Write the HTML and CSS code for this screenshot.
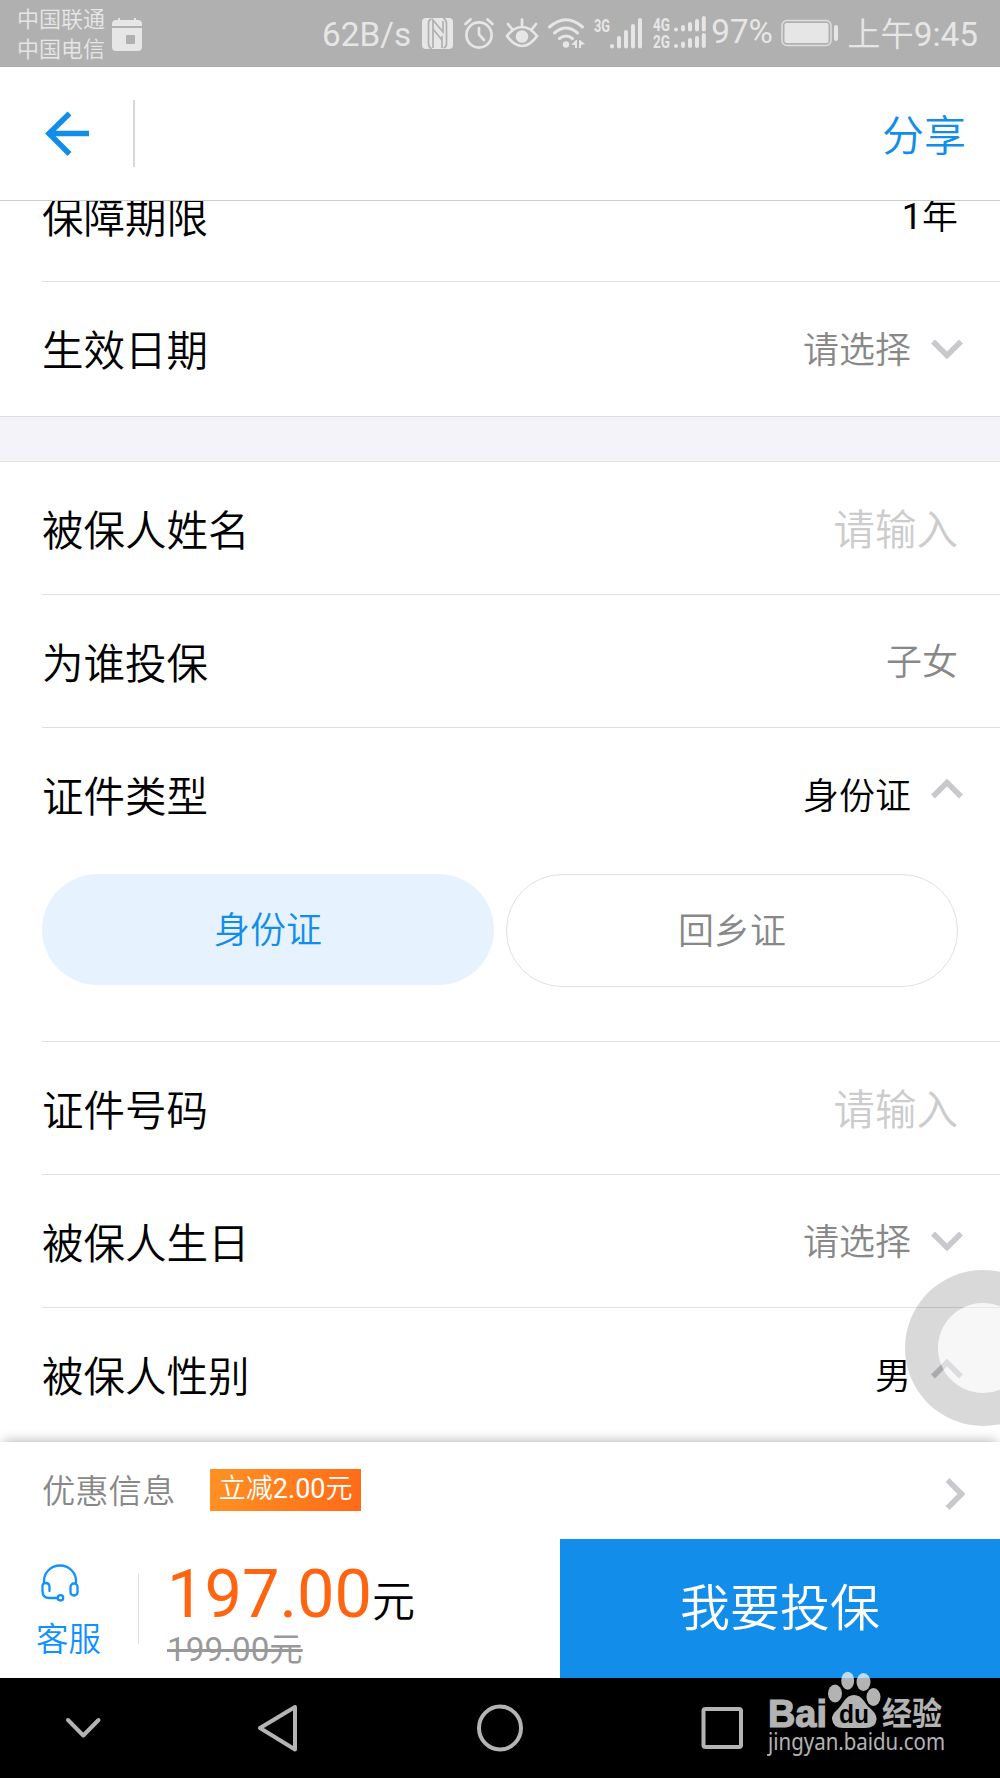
FILE: index.html
```html
<!DOCTYPE html>
<html lang="zh-Hans">
<head>
    <meta charset="UTF-8">
    <meta name="viewport" content="width=device-width, initial-scale=1.0">
    <title>投保信息</title>
    <link rel="stylesheet" href="styles.css">
</head>
<body>
    <div class="phone">
        <!-- 系统状态栏 -->
        <div class="status-bar">
            <div class="carriers">
                <span>中国联通</span>
                <span>中国电信</span>
            </div>
            <svg class="icon-calendar" width="30" height="33" viewBox="0 0 30 33">
                <path fill="#e6e6e6" d="M0 8V6q0-4 4-4h2V0h2v2h14V0h2v2h2q4 0 4 4v2zM0 10h30v19q0 4-4 4H4q-4 0-4-4z"/>
                <rect x="14" y="17" width="9" height="9" rx="1" fill="#b0b0b0"/>
            </svg>
            <div class="status-right">
                <span class="speed num">62B/s</span>
                <svg class="icon-nfc" width="31" height="31" viewBox="0 0 31 31">
                    <rect width="31" height="31" rx="4" fill="#e6e6e6"/>
                    <path fill="none" stroke="#b0b0b0" stroke-width="1.700" d="M9.500 31Q6.500 29 6.500 25V5q0-3 3-4M11 30V2l10 12V3M21.500 0q3 2 3 6v20q0 3-3 4M20 30V18M11 11l9 11v8"/>
                </svg>
                <svg class="icon-alarm" width="30" height="31" viewBox="0 0 30 31" fill="none" stroke="#e6e6e6" stroke-width="2.700" stroke-linecap="round">
                    <circle cx="15" cy="17" r="12.600"/>
                    <path d="M1.500 6l5-4.500M23.500 1.500l5 4.500M15 10v6.500l5 5.500"/>
                </svg>
                <svg class="icon-eye" width="34" height="30" viewBox="0 0 34 30" fill="none" stroke="#e6e6e6" stroke-width="2.700" stroke-linecap="round">
                    <path d="M2 18Q9 9 17 9t15 9Q25 28 17 28T2 18zM17 1.500v6M3 6l4 5M31 6l-4 5"/>
                    <circle cx="17" cy="18.500" r="6.300" fill="#e6e6e6" stroke="none"/>
                </svg>
                <svg class="icon-wifi" width="38" height="31" viewBox="0 0 38 31" fill="none" stroke="#e6e6e6" stroke-width="3" stroke-linecap="round">
                    <path d="M1.500 9q16.500-14.500 33 0M6.500 15q11.500-10 23 0M11.500 20.500q6.500-5 13 0"/>
                    <circle cx="18" cy="26.500" r="3.200" fill="#e6e6e6" stroke="none"/>
                    <path fill="#e6e6e6" stroke="none" d="M24 26l4-4h1v8h-2v-3h-3zM31 22h1l5 4-4 1v3h-2z"/>
                </svg>
                <svg class="icon-signal" width="48" height="32" viewBox="0 0 48 32">
                    <text class="net" x="0" y="13.500" font-size="18" textLength="16" lengthAdjust="spacingAndGlyphs">3G</text>
                    <path stroke="#e6e6e6" stroke-width="4" stroke-linecap="round" d="M18 28v.5M25 20v8.500M32 14v14.500M39 8v20.500M46 2v26.500"/>
                </svg>
                <svg class="icon-dual" width="53" height="33" viewBox="0 0 53 33">
                    <text class="net" x="0" y="15" font-size="18" textLength="17" lengthAdjust="spacingAndGlyphs">4G</text>
                    <text class="net" x="0" y="32" font-size="18" textLength="17" lengthAdjust="spacingAndGlyphs">2G</text>
                    <path stroke="#e6e6e6" stroke-width="4" stroke-linecap="round" d="M23 13.500v.1M30 11v2.500M37 8v5.500M44 5v8.500M50.800 2v11.500M23 30v.1M30 27.500v2.500M37 24v6M44 22v8M50.800 19v11"/>
                </svg>
                <span class="percent num">97%</span>
                <svg class="icon-battery" width="57" height="28" viewBox="0 0 57 28">
                    <rect x="1" y="1.500" width="49" height="25" rx="5" fill="none" stroke="#dedede" stroke-width="1.500"/>
                    <rect x="3.500" y="4" width="44" height="20" rx="2" fill="#e6e6e6"/>
                    <rect x="53" y="6" width="4" height="16" rx="2" fill="#e6e6e6"/>
                </svg>
                <span class="time">上午<span class="num">9:45</span></span>
            </div>
        </div>

        <header class="title-bar">
            <svg class="icon-back" width="44" height="45" viewBox="0 0 44 45" fill="none" stroke="#128eea" stroke-width="5.500">
                <path d="M24.500 2.500L4 22.500 24.500 43M4 22.500h40"/>
            </svg>
            <span class="title-line"></span>
            <a class="share">分享</a>
        </header>

        <!-- 投保表单，第一行滚动到标题栏下方 -->
        <main class="content">
            <div class="form">
                <div class="row">
                    <span class="label">保障期限</span>
                    <span class="value dark"><span class="num">1</span>年</span>
                </div>
                <div class="row">
                    <span class="label">生效日期</span>
                    <span class="value">请选择</span>
                    <svg class="arrow" width="32" height="20" viewBox="0 0 32 20"><path d="M2 2.500l14 14 14-14"/></svg>
                </div>
            </div>
            <div class="gap"></div>
            <div class="form">
                <div class="row">
                    <span class="label">被保人姓名</span>
                    <span class="value hint">请输入</span>
                </div>
                <div class="row">
                    <span class="label">为谁投保</span>
                    <span class="value">子女</span>
                </div>
                <div class="row with-options">
                    <span class="label">证件类型</span>
                    <span class="value dark">身份证</span>
                    <svg class="arrow up" width="32" height="20" viewBox="0 0 32 20"><path d="M2 17.500l14-14 14 14"/></svg>
                </div>
                <div class="options">
                    <span class="option active">身份证</span>
                    <span class="option">回乡证</span>
                </div>
                <div class="row">
                    <span class="label">证件号码</span>
                    <span class="value hint">请输入</span>
                </div>
                <div class="row">
                    <span class="label">被保人生日</span>
                    <span class="value">请选择</span>
                    <svg class="arrow" width="32" height="20" viewBox="0 0 32 20"><path d="M2 2.500l14 14 14-14"/></svg>
                </div>
                <div class="row">
                    <span class="label">被保人性别</span>
                    <span class="value dark">男</span>
                    <svg class="arrow up" width="32" height="20" viewBox="0 0 32 20"><path d="M2 17.500l14-14 14 14"/></svg>
                </div>
            </div>
        </main>

        <footer class="bottom">
            <div class="coupon">
                <span class="coupon-label">优惠信息</span>
                <span class="badge">立减<span class="num">2.00</span>元</span>
                <svg class="arrow next" width="20" height="32" viewBox="0 0 20 32"><path d="M2.500 2l14 14-14 14"/></svg>
            </div>
            <div class="pay">
                <div class="service">
                    <svg width="38" height="38" viewBox="0 0 38 38" fill="none" stroke="#0f92ff" stroke-width="2.300" stroke-linecap="round">
                        <path d="M3 19v-2a16 15.500 0 0 1 32 0v2"/>
                        <path d="M8.500 27v-4q0-4-3.700-4T1.500 23v4q0 7 7 7H17"/>
                        <rect x="29.500" y="19.500" width="7" height="12" rx="3.300"/>
                        <circle cx="19.500" cy="33.800" r="2.700"/>
                    </svg>
                    <span>客服</span>
                </div>
                <div class="price">
                    <div class="now"><b>197.00</b>元</div>
                    <div class="old num">199.00元</div>
                </div>
                <a class="buy">我要投保</a>
            </div>
        </footer>

        <!-- 系统导航键 -->
        <nav class="nav-bar">
            <svg width="1000" height="100" viewBox="0 0 1000 100" fill="none" stroke="#b4b4b4" stroke-width="4" stroke-linecap="round" stroke-linejoin="round">
                <path d="M68 42l15.300 15.500L98.500 42"/>
                <path d="M295 29v42.500L260 50z"/>
                <ellipse cx="500" cy="50" rx="21" ry="21.500"/>
                <rect x="703.500" y="31" width="37.500" height="38" rx="2"/>
            </svg>
        </nav>

        <div class="float-ball"></div>

        <!-- 水印 -->
        <svg class="watermark" width="190" height="90" viewBox="0 0 190 90">
            <g fill="#fff" opacity=".7">
                <text class="wm-logo wm-bai" x="1" y="56.500" font-size="39" textLength="59" lengthAdjust="spacingAndGlyphs">Bai</text>
                <ellipse cx="68" cy="23.500" rx="7" ry="9"/>
                <ellipse cx="80.700" cy="10.700" rx="6.500" ry="9"/>
                <ellipse cx="96.500" cy="12" rx="7" ry="9"/>
                <ellipse cx="106.500" cy="27" rx="7" ry="9"/>
                <path d="M87 25q6 0 10 6 3 5 8 9 5 5 4.500 10-1 8-11.500 8H76q-10 0-11-9 0-5 5-9 4-4 7-9 4-6 10-6z"/>
                <text class="wm-cn" x="115" y="55" font-size="32" textLength="60" lengthAdjust="spacingAndGlyphs">经验</text>
                <text class="wm-url" x="1" y="80" font-size="23" textLength="177" lengthAdjust="spacingAndGlyphs">jingyan.baidu.com</text>
            </g>
            <text class="wm-logo wm-du" x="72" y="53" font-size="26" textLength="30" lengthAdjust="spacingAndGlyphs">du</text>
        </svg>
    </div>
</body>
</html>
```
FILE: styles.css
```css
:root {
    --blue: #128eea;
    --orange: #ff6410;
    --gray: #888;
    --line: #e0e0e2;
    --status: #e6e6e6;
}

* {
    box-sizing: border-box;
}

body {
    margin: 0;
    font-family: Roboto, 'Noto Sans CJK SC', sans-serif;
    font-weight: 350;
    color: #000;
    background: #fff;
}

/* 数字用常规字重 */
.num {
    font-weight: 400;
}

.phone {
    position: relative;
    display: flex;
    flex-direction: column;
    width: 1000px;
    height: 1778px;
    overflow: hidden;
}

/* 状态栏 */
.status-bar {
    display: flex;
    flex: none;
    height: 67px;
    padding-left: 17px;
    background: #b0b0b0;
    border-bottom: 1px solid #a8a8a8;
    color: var(--status);
}

.carriers {
    display: flex;
    flex-direction: column;
    width: 89px;
    padding-top: 5px;
    font-size: 22px;
    line-height: 30px;
}

.icon-calendar {
    margin: 18px 0 0 6px;
}

.status-right {
    display: flex;
    flex: 1;
    padding-right: 22px;
    justify-content: flex-end;
    font-size: 33.3px;
    line-height: 69px;
    white-space: nowrap;
}

.status-right svg {
    flex: none;
    margin-top: 18px;
    overflow: visible;
}

.speed { margin-right: 11px; }
.percent { line-height: 64px; width: 70px; }
.icon-nfc { margin-right: 11px; }
.icon-alarm { margin-right: 11px; }
.icon-eye { margin-right: 9px; }
.icon-wifi { margin-right: 8px; }
.icon-signal { margin-right: 11px; }
.icon-dual { margin-right: 5px; }
.icon-battery { margin-right: 9px; }
.status-right .icon-dual { margin-top: 16px; }
.status-right .icon-battery { margin-top: 19px; }

.net {
    font-family: Roboto, sans-serif;
    font-weight: 700;
    fill: var(--status);
}

/* 标题栏 */
.title-bar {
    display: flex;
    flex: none;
    align-items: center;
    height: 134px;
    padding: 0 34px 0 45px;
    border-bottom: 1px solid #ccc;
}

.title-line {
    width: 2px;
    height: 67px;
    margin-left: 44px;
    background: #d8d8d8;
}

.share {
    margin-left: auto;
    padding-bottom: 2px;
    font-size: 42px;
    color: var(--blue);
}

/* 表单 */
.content {
    flex: none;
    height: 1241px;
    overflow: hidden;
}

.content > .form:first-child {
    margin-top: -52px;
    padding-bottom: 1px;
}

.form {
    padding-left: 42px;
}

.row {
    display: flex;
    align-items: center;
    height: 133px;
    padding-right: 42px;
    border-bottom: 1px solid var(--line);
}

.form .row:last-child,
.row.with-options {
    border-bottom: 0;
}

.label {
    flex: 1;
    padding-bottom: 1px;
    font-size: 41.5px;
}

.value {
    padding-bottom: 4px;
    font-size: 36px;
    color: var(--gray);
}

.value.dark {
    color: #000;
}

.value.hint {
    padding-bottom: 2px;
    font-size: 41.5px;
    color: #ccc;
}

.arrow {
    margin: 0 -5px 0 20px;
    fill: none;
    stroke: #c8c8cd;
    stroke-width: 5.5;
}

.arrow.up {
    margin-top: -12px;
}

.gap {
    height: 46px;
    background: #f3f3f9;
    border-top: 1px solid var(--line);
    border-bottom: 1px solid var(--line);
}

.options {
    display: flex;
    gap: 12px;
    height: 181px;
    padding: 13px 42px 0 0;
    border-bottom: 1px solid var(--line);
}

.option {
    width: 452px;
    height: 113px;
    border: 1px solid var(--line);
    border-radius: 56px;
    font-size: 36px;
    line-height: 114px;
    text-align: center;
    color: var(--gray);
}

.option.active {
    height: 111px;
    border: 0;
    background: #e6f3fe;
    color: var(--blue);
}

/* 底部价格栏 */
.bottom {
    position: relative;
    flex: none;
    height: 236px;
    background: #fff;
    box-shadow: 0 -5px 10px -3px rgba(0, 0, 0, .25);
}

.coupon {
    display: flex;
    align-items: center;
    height: 97px;
    padding: 0 35px 0 42px;
}

.coupon-label {
    padding-bottom: 4px;
    font-size: 33.3px;
    color: var(--gray);
}

.badge {
    width: 151px;
    height: 42px;
    margin: 0 0 1px 35px;
    background: linear-gradient(100deg, #ff9224, #ff6a18);
    color: #fff;
    font-size: 27px;
    line-height: 41px;
    text-align: center;
}

.arrow.next {
    margin: 6px 0 0 auto;
}

.pay {
    display: flex;
    height: 139px;
}

.service {
    display: flex;
    flex-direction: column;
    width: 139px;
    padding: 25px 0 0 36px;
    color: #0f92ff;
    font-size: 32.5px;
    line-height: 38px;
    background: linear-gradient(var(--line), var(--line)) no-repeat 138px 35px / 1px 70px;
}

.service svg {
    margin: 0 0 19px 5px;
}

.price {
    flex: 1;
    padding: 16px 0 0 28px;
}

.now {
    height: 76px;
    font-size: 43px;
    line-height: 78px;
}

.now b {
    font-size: 66.7px;
    font-weight: 400;
    color: var(--orange);
}

.old {
    font-size: 33.3px;
    line-height: 38px;
    color: #999;
    text-decoration: line-through;
}

.buy {
    width: 440px;
    background: var(--blue);
    color: #fff;
    font-size: 50px;
    line-height: 141px;
    text-align: center;
}

.nav-bar {
    flex: none;
    height: 100px;
    background: #000;
}

/* 悬浮球，盖在表单右侧 */
.float-ball {
    position: absolute;
    top: 1270px;
    left: 905px;
    width: 156px;
    height: 156px;
    border: 33px solid rgba(0, 0, 0, .15);
    border-radius: 50%;
    background: rgba(239, 239, 239, .5);
    background-clip: padding-box;
}

.watermark {
    position: absolute;
    top: 1670px;
    left: 767px;
}

.wm-logo {
    font-family: 'Liberation Sans', sans-serif;
    font-weight: 700;
}

.wm-bai {
    stroke: #fff;
    stroke-width: 1.2;
}

.wm-du {
    fill: #000;
}

.wm-cn {
    font-family: 'Noto Sans CJK SC', sans-serif;
    font-weight: 700;
}

.wm-url {
    font-family: 'Noto Sans', sans-serif;
    font-weight: 400;
}
```
